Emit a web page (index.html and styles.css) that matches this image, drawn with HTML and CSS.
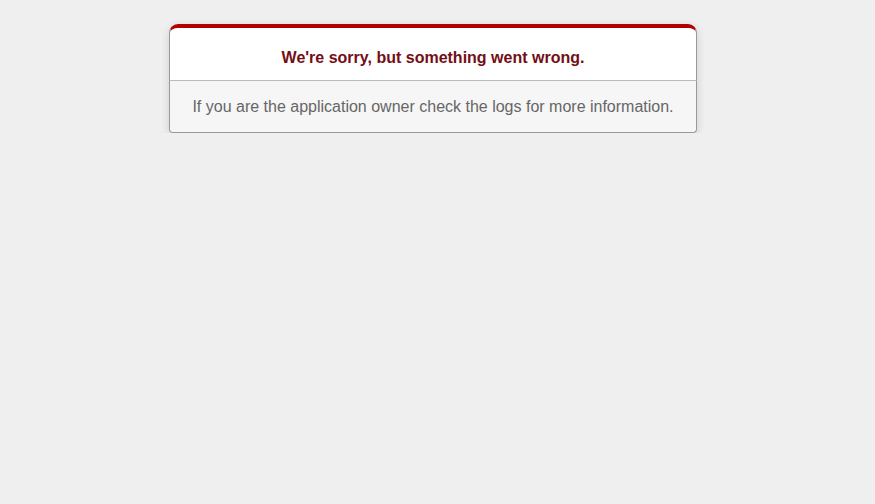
FILE: index.html
```html
<!DOCTYPE html>
<html>
<head>
<meta charset="utf-8">
<title>We're sorry, but something went wrong (500)</title>
<link rel="stylesheet" href="styles.css">
</head>
<body>
<div class="dialog">
  <div class="dialog-head">
    <h1>We're sorry, but something went wrong.</h1>
  </div>
  <p class="dialog-body">If you are the application owner check the logs for more information.</p>
</div>
</body>
</html>
```

FILE: styles.css
```css
body {
  background-color: #EFEFEF;
  color: #2E2F30;
  text-align: center;
  font-family: "Liberation Sans", Arial, sans-serif;
  font-size: 16px;
  margin: 0 9px 0 0;
}

.dialog {
  width: 528px;
  margin: 24px auto 0;
  border-radius: 9px 9px 4px 4px;
  box-shadow: 0 3px 8px rgba(50, 50, 50, 0.17);
}

.dialog-head {
  border: 1px solid #999;
  border-bottom: 1px solid #BBB;
  border-top: 4px solid #B00100;
  border-top-left-radius: 9px;
  border-top-right-radius: 9px;
  background-color: #fff;
  padding: 7px 12% 0;
}

.dialog-head h1 {
  font-size: 16px;
  color: #730E15;
  line-height: 24px;
  margin: 10.72px 0;
}

.dialog-body {
  margin: 0;
  padding: 16px;
  background-color: #F6F6F6;
  border: 1px solid #999;
  border-top: none;
  border-bottom-left-radius: 4px;
  border-bottom-right-radius: 4px;
  color: #666;
  line-height: 19px;
}
```
